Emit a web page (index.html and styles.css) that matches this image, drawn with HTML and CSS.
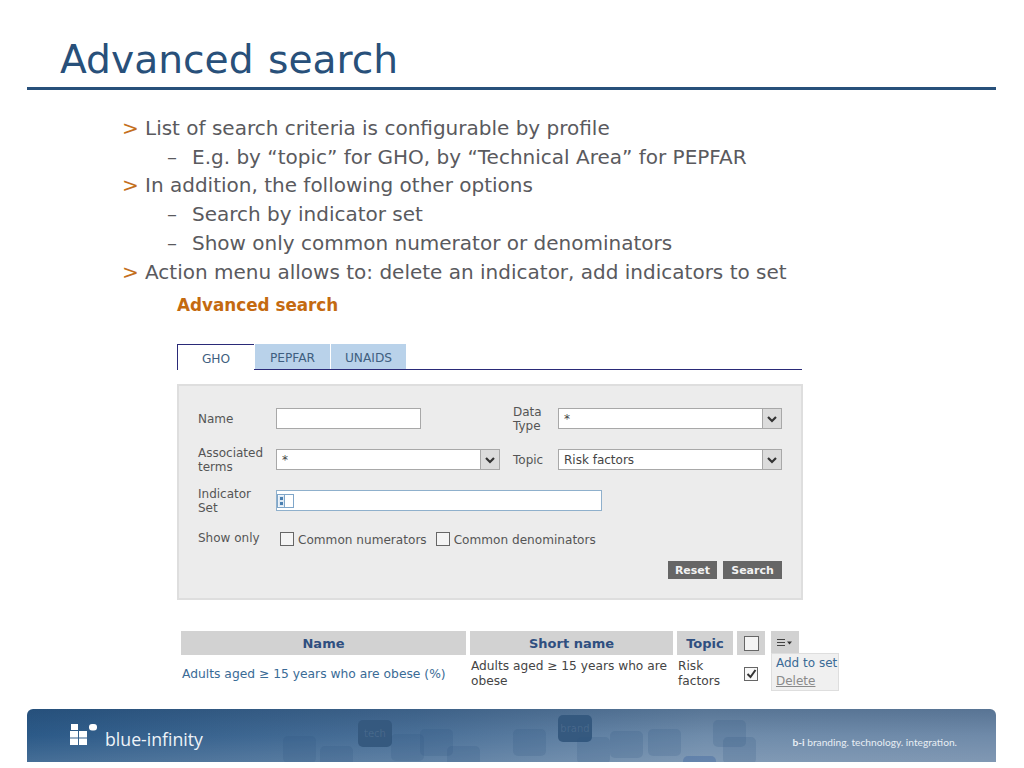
FILE: index.html
```html
<!DOCTYPE html>
<html lang="en">
<head>
<meta charset="utf-8">
<title>Advanced search</title>
<link rel="stylesheet" href="styles.css">
</head>
<body>
<div class="slide">
  <header class="head">
    <h1 class="title">Advanced search</h1>
    <div class="rule"></div>
  </header>
  <main class="content">
    <ul class="bullets">
      <li class="l1"><span class="mark">&gt;</span>List of search criteria is configurable by profile</li>
      <li class="l2"><span class="dash">–</span>E.g. by “topic” for GHO, by “Technical Area” for PEPFAR</li>
      <li class="l1"><span class="mark">&gt;</span>In addition, the following other options</li>
      <li class="l2"><span class="dash">–</span>Search by indicator set</li>
      <li class="l2"><span class="dash">–</span>Show only common numerator or denominators</li>
      <li class="l1"><span class="mark">&gt;</span>Action menu allows to: delete an indicator, add indicators to set</li>
    </ul>
    <section class="shot">
      <h2 class="shot-title">Advanced search</h2>
      <nav class="tabs">
        <span class="tab active">GHO</span>
        <span class="tab">PEPFAR</span>
        <span class="tab">UNAIDS</span>
      </nav>
      <form class="panel">
        <div class="grid">
          <label class="lbl col-a">Name</label>
          <div class="field f-name col-b"></div>
          <label class="lbl col-c">Data<br>Type</label>
          <div class="field sel col-d"><span class="val">*</span><span class="arrow"><svg width="12" height="8" viewBox="0 0 12 8"><path d="M2 2l4 4 4-4" fill="none" stroke="#333" stroke-width="2.2"/></svg></span></div>

          <label class="lbl col-a">Associated<br>terms</label>
          <div class="field sel col-b"><span class="val">*</span><span class="arrow"><svg width="12" height="8" viewBox="0 0 12 8"><path d="M2 2l4 4 4-4" fill="none" stroke="#333" stroke-width="2.2"/></svg></span></div>
          <label class="lbl col-c">Topic</label>
          <div class="field sel col-d"><span class="val">Risk factors</span><span class="arrow"><svg width="12" height="8" viewBox="0 0 12 8"><path d="M2 2l4 4 4-4" fill="none" stroke="#333" stroke-width="2.2"/></svg></span></div>

          <label class="lbl col-a">Indicator<br>Set</label>
          <div class="field f-set"><svg class="set-ico" width="17" height="14" viewBox="0 0 17 14"><rect x=".5" y=".5" width="16" height="13" fill="#fff" stroke="#7fa6c9"/><rect x="1.500" y="1.500" width="6" height="11" fill="#dce8f3"/><path d="M3 3h3v3H3zM3 8h3v3H3z" fill="#4a7fb0"/><path d="M7.500 1v12" stroke="#7fa6c9"/></svg></div>
        </div>
        <div class="show">
          <span class="show-lbl">Show only</span>
          <span class="check"></span><span class="opt">Common numerators</span>
          <span class="check c2"></span><span class="opt">Common denominators</span>
        </div>
        <div class="actions">
          <button type="button" class="btn">Reset</button>
          <button type="button" class="btn btn-s">Search</button>
        </div>
      </form>
      <div class="results">
        <div class="hrow">
          <div class="hc c-name">Name</div>
          <div class="hc c-short">Short name</div>
          <div class="hc c-topic">Topic</div>
          <div class="hc c-chk"><span class="check big"></span></div>
          <div class="hc c-menu"><svg width="16" height="8" viewBox="0 0 16 8"><path d="M0 .5h8M0 3.500h8M0 6.500h8" stroke="#444" stroke-width="1.2"/><path d="M10 2.500h5l-2.500 3z" fill="#333"/></svg></div>
        </div>
        <div class="drow">
          <div class="c-name dname">Adults aged ≥ 15 years who are obese (%)</div>
          <div class="c-short dtext">Adults aged ≥ 15 years who are obese</div>
          <div class="c-topic dtext">Risk factors</div>
          <div class="c-chk dchk"><span class="check checked"><svg width="11" height="10" viewBox="0 0 11 10"><path d="M1.500 5l3 3 5-7" fill="none" stroke="#333" stroke-width="2"/></svg></span></div>
        </div>
        <div class="menu">
          <a class="m-add">Add to set</a>
          <a class="m-del">Delete</a>
        </div>
      </div>
    </section>
  </main>
  <footer class="foot">
    <div class="tiles">
      <span class="tile" style="left:256px;top:27px"></span>
      <span class="tile" style="left:293px;top:37px"></span>
      <span class="tile dark" style="left:331px;top:11px">tech</span>
      <span class="tile" style="left:364px;top:25px"></span>
      <span class="tile" style="left:393px;top:20px"></span>
      <span class="tile" style="left:420px;top:37px"></span>
      <span class="tile" style="left:486px;top:20px"></span>
      <span class="tile dark" style="left:531px;top:6px">brand</span>
      <span class="tile" style="left:550px;top:28px"></span>
      <span class="tile" style="left:583px;top:22px"></span>
      <span class="tile" style="left:621px;top:20px"></span>
      <span class="tile" style="left:686px;top:11px"></span>
      <span class="tile" style="left:696px;top:28px"></span>
      <span class="tile dark2" style="left:656px;top:47px"></span>
    </div>
    <div class="brand">
      <svg class="logo" width="27" height="22" viewBox="0 0 27 22"><path d="M1 0h7v6H1zM0 7h8v6.500H0zM9 7h8v6.500H9zM0 14.500h8V21H0zM9 14.500h8V21H9z" fill="#fff"/><rect x="19" y="0" width="8" height="6.500" rx="3" fill="#fff"/></svg>
      <span class="bname">blue-infinity</span>
    </div>
    <div class="tag"><b>b-i</b> branding. technology. integration.</div>
  </footer>
</div>
</body>
</html>
```
FILE: styles.css
```css
* { box-sizing: border-box; }
html, body { margin: 0; padding: 0; background: #fff; }
body { font-family: "DejaVu Sans", Verdana, sans-serif; }
.slide { width: 1024px; height: 768px; overflow: hidden; display: flex; flex-direction: column; }

.head { padding: 37px 28px 0 27px; }
.title { margin: 0 0 0 33px; font-size: 39.200px; line-height: 45px; word-spacing: 2px; font-weight: 400; color: #28507a; height: 50px; }
.rule { height: 3px; background: #28507a; }

.content { flex: 1; min-height: 0; }
.bullets { list-style: none; margin: 24px 0 0; padding: 0 0 0 122px; font-size: 20px; line-height: 28.700px; color: #5a5a5e; }
.l1, .l2 { white-space: nowrap; display: flex; }
.l2 { padding-left: 45px; }
.mark { width: 23px; color: #c46f1c; }
.dash { width: 25px; }

.shot { margin: 8px 0 0 177px; width: 680px; color: #555; font-size: 12px; }
.shot-title { margin: 0; font-size: 16.800px; line-height: 22px; font-weight: 700; color: #c46a10; }

.tabs { display: flex; margin: 28px 0 0; width: 625px; height: 26px; border-bottom: 1px solid #2a2a78; align-items: flex-end; }
.tab { height: 25px; padding-top: 2px; display: flex; align-items: center; justify-content: center; width: 75px; background: #b9d2ea; color: #3f5f80; font-size: 12.200px; margin-right: 1px; }
.tab.active { width: 77px; height: 26px; background: #fff; border: 1px solid #2a2a78; border-width: 1px 0 0 1px; position: relative; top: 1px; }

.panel { margin-top: 14px; width: 626px; height: 216px; background: #ececec; border: 2px solid #dedede; padding: 22px 19px 0 19px; }
.grid { display: grid; grid-template-columns: 78px 224px 13px 45px 224px; grid-auto-rows: 21px; row-gap: 20px; align-items: center; }
.col-a { grid-column: 1; }
.col-b { grid-column: 2; }
.col-c { grid-column: 4; }
.col-d { grid-column: 5; }
.lbl { line-height: 14px; font-size: 12px; color: #555; }
.field { height: 21px; background: #fff; border: 1px solid #a8a8a8; font-size: 12px; display: flex; align-items: center; color: #444; }
.f-name { width: 145px; }
.sel { padding-left: 5px; justify-content: space-between; }
.sel .val { line-height: 1; }
.arrow { width: 19px; height: 19px; background: #dcdcdc; border-left: 1px solid #a8a8a8; display: flex; align-items: center; justify-content: center; }
.f-set { grid-column: 2 / 6; width: 326px; border-color: #8fb0cc; padding-left: 0; }
.set-ico { flex: none; }

.show { margin-top: 20px; display: flex; align-items: center; height: 16px; font-size: 12.100px; }
.show-lbl { width: 82px; font-size: 12px; position: relative; top: -1px; }
.check { width: 14px; height: 14px; background: #f4f4f4; border: 1px solid #666; display: inline-flex; align-items: center; justify-content: center; flex: none; }
.opt { margin-left: 4px; padding-top: 2px; }
.c2 { margin-left: 9px; }

.actions { display: flex; justify-content: flex-end; gap: 6px; margin-top: 14px; }
.btn { height: 18px; width: 49px; padding: 0; border: 0; background: #666; color: #f2f2f2; font: 700 11px "DejaVu Sans", Verdana, sans-serif; }
.btn-s { width: 59px; }

.results { position: relative; margin: 31px 0 0 4px; }
.hrow, .drow { display: flex; }
.hrow { height: 24px; }
.hc { height: 24px; background: #d2d2d2; color: #2f4f80; font-weight: 700; font-size: 13px; display: flex; align-items: center; justify-content: center; }
.c-name { width: 285px; margin-right: 4px; flex: none; }
.c-short { width: 203px; margin-right: 4px; flex: none; }
.c-topic { width: 56px; margin-right: 4px; flex: none; }
.c-chk { width: 28px; margin-right: 6px; flex: none; }
.c-menu { width: 28px; flex: none; }
.drow { padding-top: 4px; font-size: 12.200px; line-height: 15px; }
.dname { color: #3a6b96; font-size: 12.300px; padding: 8px 0 0 1px; white-space: nowrap; }
.dtext { color: #444; padding-left: 1px; }
.dchk { display: flex; justify-content: center; padding-top: 8px; }
.checked { background: #f8f8f8; }
.big { width: 15px; height: 15px; }
.menu { position: absolute; left: 590px; top: 22px; width: 68px; height: 38px; background: #f0f0f0; border: 1px solid #dedede; font-size: 12px; line-height: 18px; padding: 0 0 0 4px; white-space: nowrap; }
.m-add { display: block; color: #3a6b96; }
.m-del { display: block; color: #8a8a8a; text-decoration: underline; }

.foot { position: relative; flex: none; margin: 0 28px 6px 27px; height: 53px; border-radius: 6px 6px 0 0; overflow: hidden; background: linear-gradient(180deg, rgba(20,50,85,.25) 0, rgba(255,255,255,0) 50%, rgba(255,255,255,.12) 100%), linear-gradient(90deg, #2c5a88 0, #4a7098 40%, #6f8cab 70%, #6f8aa9 100%); display: flex; justify-content: space-between; align-items: center; color: #fff; }
.tiles { position: absolute; inset: 0; }
.tile { position: absolute; width: 33px; height: 27px; border-radius: 5px; background: rgba(44,85,130,.18); color: rgba(255,255,255,.1); font-size: 10px; display: flex; align-items: center; justify-content: center; }
.dark { background: #35597f; width: 34px; }
.dark2 { background: rgba(60,100,160,.4); }
.brand { position: relative; display: flex; align-items: center; margin: 6px 0 0 43px; }
.logo { display: block; margin-top: -8px; }
.bname { font-family: "Open Sans", sans-serif; font-size: 17.700px; margin-left: 8px; color: #eef3f8; }
.tag { position: relative; font-family: Lato, sans-serif; font-size: 10.200px; margin-right: 39px; margin-top: 12px; color: #e8eef4; }
```
